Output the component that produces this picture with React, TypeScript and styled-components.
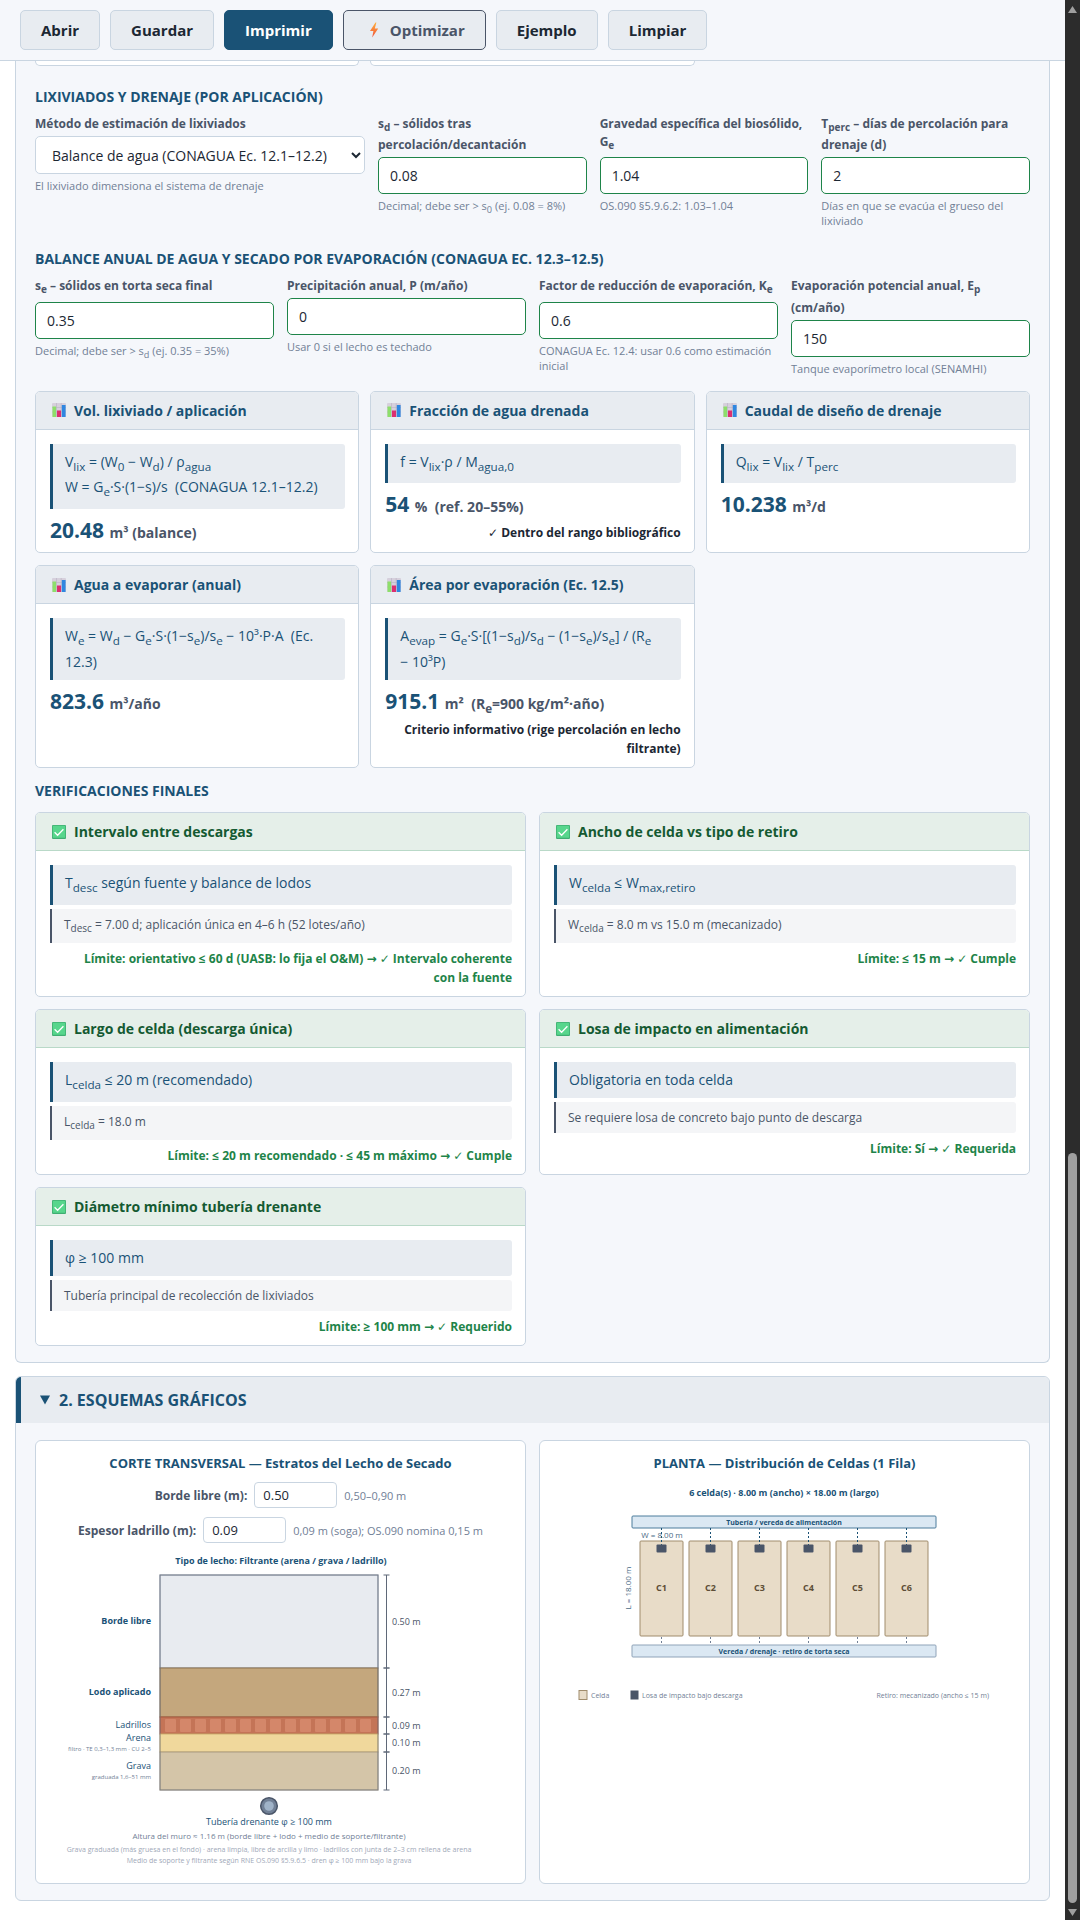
import React, { useId, useState } from "react";
import type { ReactNode } from "react";
import styled, { createGlobalStyle } from "styled-components";

const c = {
  primary: "#1a5276",
  border: "#c9d5e1",
  panel: "#f5f7fb",
  soft: "#e8ecf1",
  text: "#1c2733",
  muted: "#4a5568",
  hint: "#718096",
  ok: "#1e8449",
};

const GlobalStyle = createGlobalStyle`
  *, *::before, *::after { box-sizing: border-box; }
  body {
    margin: 0;
    background: #fff;
    color: ${c.text};
    font-family: "Open Sans", "Noto Sans", "DejaVu Sans", sans-serif;
    font-size: 14px;
  }
  button, input, select { font-family: inherit; }
  h2, h3, p { margin: 0; }
  sub { line-height: 1.7; }
`;

const Shell = styled.div`
  display: grid;
  grid-template-columns: minmax(0, 1fr) 15px;
  min-height: 100vh;
`;

const Page = styled.div`
  display: flex;
  flex-direction: column;
`;

const Toolbar = styled.header`
  display: flex;
  gap: 10px;
  padding: 10px 20px;
  background: ${c.panel};
  border-bottom: 1px solid ${c.border};
`;

const ToolButton = styled.button<{ $kind?: "primary" | "outline" }>`
  display: flex;
  align-items: center;
  gap: 10px;
  height: 40px;
  padding: 0 20px;
  border: 1px solid
    ${(p) =>
      p.$kind === "primary" ? c.primary : p.$kind === "outline" ? c.muted : c.border};
  border-radius: 5px;
  background: ${(p) => (p.$kind === "primary" ? c.primary : c.soft)};
  color: ${(p) =>
    p.$kind === "primary" ? "#fff" : p.$kind === "outline" ? c.muted : c.text};
  font-size: 15px;
  font-weight: 700;
  cursor: pointer;
`;

const Main = styled.main`
  display: flex;
  flex-direction: column;
  gap: 13px;
  padding: 0 15px 20px;
`;

const Panel = styled.section<{ $open?: boolean }>`
  background: ${c.panel};
  border: 1px solid ${c.border};
  border-top-width: ${(p) => (p.$open ? 0 : 1)}px;
  border-radius: ${(p) => (p.$open ? "0 0 6px 6px" : "6px")};
  overflow: hidden;
`;

const PanelBody = styled.div<{ $flush?: boolean }>`
  padding: ${(p) => (p.$flush ? 0 : 17)}px 19px 16px;
`;

const PanelHead = styled.button`
  display: flex;
  align-items: center;
  gap: 9px;
  width: 100%;
  height: 46px;
  padding: 0 19px;
  border: 0;
  border-left: 5px solid ${c.primary};
  background: ${c.soft};
  color: ${c.primary};
  font-size: 16px;
  font-weight: 700;
  text-align: left;
`;

const Grid = styled.div<{ $cols: string; $gap: number }>`
  display: grid;
  grid-template-columns: ${(p) => p.$cols};
  gap: 12px ${(p) => p.$gap}px;
`;

const Results = styled.div`
  display: grid;
  grid-template-columns: repeat(3, minmax(0, 1fr));
  gap: 12px 11px;
  margin-top: 15px;
`;

const CardTail = styled.div`
  height: 5px;
  background: #fff;
  border: 1px solid ${c.border};
  border-top: 0;
  border-radius: 0 0 5px 5px;
`;

const SectionTitle = styled.h3<{ $top: number; $bottom: number }>`
  margin: ${(p) => p.$top}px 0 ${(p) => p.$bottom}px;
  color: ${c.primary};
  font-size: 14px;
  line-height: 18px;
  font-weight: 700;
`;

const FieldBox = styled.div`
  min-width: 0;
`;

const FieldLabel = styled.label`
  display: block;
  margin-bottom: 3px;
  color: ${c.muted};
  font-size: 12px;
  line-height: 18px;
  font-weight: 700;
`;

const TextInput = styled.input`
  display: block;
  width: 100%;
  height: 37px;
  padding: 0 11px;
  border: 1px solid ${c.ok};
  border-radius: 5px;
  background: #fff;
  color: ${c.text};
  font-size: 14px;
`;

const Select = styled.select`
  display: block;
  width: 100%;
  height: 38px;
  padding: 0 0 0 12px;
  border: 1px solid ${c.border};
  border-radius: 5px;
  background: #fff;
  color: ${c.text};
  font-size: 14px;
`;

const Hint = styled.p`
  margin-top: 4px;
  color: ${c.hint};
  font-size: 11px;
  line-height: 15px;
`;

const CardBox = styled.article`
  background: #fff;
  border: 1px solid ${c.border};
  border-radius: 5px;
  overflow: hidden;
`;

const CardHead = styled.h3<{ $ok?: boolean }>`
  display: flex;
  align-items: center;
  gap: 8px;
  padding: 9px 16px;
  background: ${(p) => (p.$ok ? "#e5efe9" : c.soft)};
  border-bottom: 1px solid ${(p) => (p.$ok ? "#b9d9c8" : c.border)};
  color: ${(p) => (p.$ok ? "#145a32" : c.primary)};
  font-size: 14px;
  line-height: 19px;
  font-weight: 700;
`;

const CardBody = styled.div`
  padding: 14px 13px 9px 14px;
`;

const Formula = styled.div`
  padding: 7px 12px;
  border-left: 3px solid ${c.primary};
  border-radius: 0 3px 3px 0;
  background: ${c.soft};
  color: ${c.primary};
  font-size: 14px;
  line-height: 22px;
`;

const Detail = styled.div`
  margin-top: 4px;
  padding: 6px 12px;
  border-left: 2px solid ${c.muted};
  border-radius: 0 3px 3px 0;
  background: #f4f5f7;
  color: ${c.muted};
  font-size: 12px;
  line-height: 19px;
`;

const Value = styled.div`
  margin-top: 8px;
  color: ${c.primary};
  font-size: 21px;
  line-height: 26px;
  font-weight: 700;
`;

const Unit = styled.span`
  color: ${c.muted};
  font-size: 14px;
  line-height: 18px;
  white-space: pre;

  sub { line-height: 1; }
`;

const Note = styled.p<{ $ok?: boolean }>`
  margin-top: 6px;
  color: ${(p) => (p.$ok ? c.ok : c.text)};
  font-size: 12px;
  line-height: 19px;
  font-weight: 700;
  text-align: right;
`;

const DrawingCard = styled.article`
  display: flex;
  flex-direction: column;
  gap: 9px;
  padding: 12px 16px 15px;
  background: #fff;
  border: 1px solid ${c.border};
  border-radius: 6px;
`;

const DrawingTitle = styled.h3`
  color: ${c.primary};
  font-size: 13px;
  line-height: 20px;
  font-weight: 700;
  text-align: center;
`;

const InlineField = styled.div`
  display: flex;
  justify-content: center;
  align-items: center;
  gap: 7px;
`;

const InlineLabel = styled.label`
  color: ${c.muted};
  font-size: 12px;
  font-weight: 700;
`;

const InlineInput = styled.input`
  width: 83px;
  height: 26px;
  padding: 0 8px;
  border: 1px solid ${c.border};
  border-radius: 4px;
  background: #fff;
  color: ${c.text};
  font-size: 13px;
`;

const InlineHint = styled.span`
  color: ${c.hint};
  font-size: 11px;
`;

const Drawing = styled.svg`
  display: block;
  width: 100%;
  height: auto;
`;

const ScrollTrack = styled.div`
  display: flex;
  flex-direction: column;
  align-items: center;
  padding: 6px 0 5px;
  background: #2c2c2c;
`;

const ScrollSpace = styled.div`
  flex: 1140 1 0;
`;

const ScrollThumb = styled.div`
  flex: 750 1 0;
  width: 9px;
  margin-bottom: 6px;
  border-radius: 5px;
  background: #9f9f9f;
`;

function ChartIcon() {
  return (
    <svg width="14" height="14" viewBox="0 0 14 14" aria-hidden="true">
      <rect width="14" height="14" rx="1" fill="#d6d0dc" />
      <path d="M0 4.5H14M0 9H14M4.5 0V14M9.2 0V14" stroke="#b9b2c4" strokeWidth="0.6" />
      <rect x="0.5" y="3.5" width="3.6" height="10.5" fill="#8ddf6b" />
      <rect x="5" y="7.5" width="4" height="6.5" fill="#dc2f70" />
      <rect x="9.8" y="2" width="3.8" height="12" fill="#2f86e0" />
    </svg>
  );
}

function CheckIcon() {
  return (
    <svg width="14" height="14" viewBox="0 0 14 14" aria-hidden="true">
      <rect width="14" height="14" rx="1" fill="#3fae72" />
      <rect x="0.8" y="0.8" width="12.4" height="12" rx="0.6" fill="#57d68c" />
      <path d="M2.6 7.2L5.6 10.2L11.4 4.2" fill="none" stroke="#fff" strokeWidth="1.3" />
    </svg>
  );
}

function BoltIcon() {
  return (
    <svg width="16" height="16" viewBox="-4 0 16 16" aria-hidden="true">
      <defs>
        <linearGradient id="bolt" x1="0" y1="0" x2="0" y2="1">
          <stop offset="0" stopColor="#ffb03a" />
          <stop offset="1" stopColor="#f0503c" />
        </linearGradient>
      </defs>
      <path d="M7.5 0.5L2 9H5.4L4.2 15.5L10.2 6.6H6.8L8.4 0.5Z" fill="url(#bolt)" />
    </svg>
  );
}

function Field({ label, value, hint }: { label: ReactNode; value: string; hint: ReactNode }) {
  const id = useId();
  const [text, setText] = useState(value);
  return (
    <FieldBox>
      <FieldLabel htmlFor={id}>{label}</FieldLabel>
      <TextInput id={id} value={text} onChange={(e) => setText(e.target.value)} />
      <Hint>{hint}</Hint>
    </FieldBox>
  );
}

function SmallField({ label, value, hint }: { label: string; value: string; hint: string }) {
  const id = useId();
  const [text, setText] = useState(value);
  return (
    <InlineField>
      <InlineLabel htmlFor={id}>{label}</InlineLabel>
      <InlineInput id={id} value={text} onChange={(e) => setText(e.target.value)} />
      <InlineHint>{hint}</InlineHint>
    </InlineField>
  );
}

interface ResultProps {
  title: string;
  formula: ReactNode;
  value: string;
  unit: ReactNode;
  note?: string;
}

function Result({ title, formula, value, unit, note }: ResultProps) {
  return (
    <CardBox>
      <CardHead>
        <ChartIcon />
        {title}
      </CardHead>
      <CardBody>
        <Formula>{formula}</Formula>
        <Value>
          {value} <Unit>{unit}</Unit>
        </Value>
        {note && <Note>{note}</Note>}
      </CardBody>
    </CardBox>
  );
}

interface CheckProps {
  title: string;
  formula: ReactNode;
  detail: ReactNode;
  note: string;
}

function Check({ title, formula, detail, note }: CheckProps) {
  return (
    <CardBox>
      <CardHead $ok>
        <CheckIcon />
        {title}
      </CardHead>
      <CardBody>
        <Formula>{formula}</Formula>
        <Detail>{detail}</Detail>
        <Note $ok>{note}</Note>
      </CardBody>
    </CardBox>
  );
}

const layers = [
  { name: "Borde libre", size: "0.50 m", y: 23, h: 93, fill: "#e8ebf0", stroke: "#8a93a3", ly: 72, bold: true },
  { name: "Lodo aplicado", size: "0.27 m", y: 116, h: 49, fill: "#c4a77d", stroke: "#8b7350", ly: 143, bold: true },
  { name: "Ladrillos", size: "0.09 m", y: 165, h: 17, fill: "#c47457", stroke: "#a8583f", ly: 176 },
  { name: "Arena", size: "0.10 m", y: 182, h: 18, fill: "#f0d89c", stroke: "#cdb070", ly: 189, sub: "filtro · TE 0,3–1,3 mm · CU 2–5" },
  { name: "Grava", size: "0.20 m", y: 200, h: 38, fill: "#d4c5a8", stroke: "#aa9c82", ly: 217, sub: "graduada 1,6–51 mm" },
];

function SectionDrawing() {
  return (
    <Drawing viewBox="0 0 457 316" role="img" aria-label="Corte transversal">
      <text x="229" y="12" textAnchor="middle" fontSize="9" fontWeight="700" fill={c.primary}>
        Tipo de lecho: Filtrante (arena / grava / ladrillo)
      </text>
      {layers.map((l) => (
        <g key={l.name}>
          <rect x="108" y={l.y} width="218" height={l.h} fill={l.fill} stroke={l.stroke} />
          <text
            x="99"
            y={l.ly}
            textAnchor="end"
            fontSize="9"
            fontWeight={l.bold ? 700 : 400}
            fill={c.primary}
          >
            {l.name}
          </text>
          {l.sub && (
            <text x="99" y={l.ly + 10} textAnchor="end" fontSize="6" fill={c.hint}>
              {l.sub}
            </text>
          )}
          <path
            d={`M334.5 ${l.y}V${l.y + l.h}M331.5 ${l.y}H337.5M331.5 ${l.y + l.h}H337.5`}
            stroke="#5f6878"
            fill="none"
          />
          <text x="340" y={l.y + l.h / 2 + 3} fontSize="9" fill={c.muted}>
            {l.size}
          </text>
        </g>
      ))}
      {Array.from({ length: 14 }, (_, i) => (
        <rect
          key={i}
          x={113 + i * 15}
          y="167"
          width="11"
          height="13"
          rx="1"
          fill="#d4876a"
        />
      ))}
      <rect x="108" y="23" width="218" height="215" fill="none" stroke="#6b7280" strokeOpacity="0.7" />
      <circle cx="217" cy="254" r="8.3" fill="#718096" stroke="#4a5568" strokeWidth="1.5" />
      <circle cx="217" cy="254" r="4.8" fill="#a0b3c8" />
      <g textAnchor="middle">
        <text x="217" y="273" fontSize="9" fill={c.primary}>
          Tubería drenante φ ≥ 100 mm
        </text>
        <text x="217" y="287" fontSize="8" fill="#718096">
          Altura del muro ≈ 1.16 m (borde libre + lodo + medio de soporte/filtrante)
        </text>
        <text x="217" y="300" fontSize="7" fill="#a0a8b8">
          Grava graduada (más gruesa en el fondo) · arena limpia, libre de arcilla y limo · ladrillos con junta de 2–3 cm rellena de arena
        </text>
        <text x="217" y="311" fontSize="7" fill="#a0a8b8">
          Medio de soporte y filtrante según RNE OS.090 §5.9.6.5 · dren φ ≥ 100 mm bajo la grava
        </text>
      </g>
    </Drawing>
  );
}

function PlanDrawing() {
  return (
    <Drawing viewBox="0 0 457 230" role="img" aria-label="Planta de celdas">
      <text x="228" y="14" textAnchor="middle" fontSize="9" fontWeight="700" fill={c.primary}>
        6 celda(s) · 8.00 m (ancho) × 18.00 m (largo)
      </text>
      <rect x="76" y="34" width="304" height="12" rx="1" fill="#dbe8f3" stroke="#4d7c9c" />
      <text x="228" y="43" textAnchor="middle" fontSize="7" fontWeight="700" fill={c.primary}>
        Tubería / vereda de alimentación
      </text>
      <rect x="76" y="163" width="304" height="12" rx="1" fill="#dbe8f3" stroke="#8fa3b8" />
      <text x="228" y="172" textAnchor="middle" fontSize="7" fontWeight="700" fill={c.primary}>
        Vereda / drenaje · retiro de torta seca
      </text>
      <text x="106" y="56" textAnchor="middle" fontSize="8" fill="#4a6a85">
        W = 8.00 m
      </text>
      <text
        x="75"
        y="106"
        textAnchor="middle"
        fontSize="8"
        fill="#4a6a85"
        transform="rotate(-90 75 106)"
      >
        L = 18.00 m
      </text>
      {Array.from({ length: 6 }, (_, i) => {
        const x = 84 + i * 49;
        return (
          <g key={i}>
            <rect x={x} y="59" width="43" height="95" rx="1" fill="#e8dcc8" stroke="#a08c6c" />
            <path d={`M${x + 21.5} 46V63`} stroke={c.primary} strokeDasharray="2 2" />
            <path d={`M${x + 21.5} 155V163`} stroke={c.hint} strokeDasharray="2 2" />
            <rect x={x + 16.5} y="62.5" width="10" height="8" rx="1" fill="#4a5568" />
            <text x={x + 21.5} y="109" textAnchor="middle" fontSize="9" fontWeight="700" fill="#5d4e37">
              C{i + 1}
            </text>
          </g>
        );
      })}
      <rect x="23" y="208.5" width="8" height="9" fill="#e8dcc8" stroke="#a08c6c" />
      <text x="35" y="216" fontSize="7" fill={c.hint}>
        Celda
      </text>
      <rect x="74.5" y="208.5" width="8" height="9" fill="#4a5568" />
      <text x="86" y="216" fontSize="7" fill={c.hint}>
        Losa de impacto bajo descarga
      </text>
      <text x="433" y="216" textAnchor="end" fontSize="7" fill={c.hint}>
        Retiro: mecanizado (ancho ≤ 15 m)
      </text>
    </Drawing>
  );
}

const nb = "\u00a0";

export default function App() {
  const [open, setOpen] = useState(true);
  return (
    <>
      <GlobalStyle />
      <Shell>
        <Page>
          <Toolbar>
            <ToolButton>Abrir</ToolButton>
            <ToolButton>Guardar</ToolButton>
            <ToolButton $kind="primary">Imprimir</ToolButton>
            <ToolButton $kind="outline">
              <BoltIcon />
              Optimizar
            </ToolButton>
            <ToolButton>Ejemplo</ToolButton>
            <ToolButton>Limpiar</ToolButton>
          </Toolbar>
          <Main>
            <Panel $open>
              <PanelBody $flush>
                <Grid $cols="repeat(3, minmax(0, 1fr))" $gap={11}>
                  <CardTail />
                  <CardTail />
                </Grid>
                <SectionTitle $top={22} $bottom={9}>
                  LIXIVIADOS Y DRENAJE (POR APLICACIÓN)
                </SectionTitle>
                <Grid $cols="330px repeat(3, minmax(0, 1fr))" $gap={13}>
                  <FieldBox>
                    <FieldLabel htmlFor="metodo">Método de estimación de lixiviados</FieldLabel>
                    <Select id="metodo">
                      <option>Balance de agua (CONAGUA Ec. 12.1–12.2)</option>
                    </Select>
                    <Hint>El lixiviado dimensiona el sistema de drenaje</Hint>
                  </FieldBox>
                  <Field
                    label={<>s<sub>d</sub> – sólidos tras percolación/decantación</>}
                    value="0.08"
                    hint={<>Decimal; debe ser &gt; s<sub>0</sub> (ej. 0.08 = 8%)</>}
                  />
                  <Field
                    label={<>Gravedad específica del biosólido, G<sub>e</sub></>}
                    value="1.04"
                    hint="OS.090 §5.9.6.2: 1.03–1.04"
                  />
                  <Field
                    label={<>T<sub>perc</sub> – días de percolación para drenaje (d)</>}
                    value="2"
                    hint="Días en que se evacúa el grueso del lixiviado"
                  />
                </Grid>
                <SectionTitle $top={22} $bottom={9}>
                  BALANCE ANUAL DE AGUA Y SECADO POR EVAPORACIÓN (CONAGUA EC. 12.3–12.5)
                </SectionTitle>
                <Grid $cols="repeat(4, minmax(0, 1fr))" $gap={13}>
                  <Field
                    label={<>s<sub>e</sub> – sólidos en torta seca final</>}
                    value="0.35"
                    hint={<>Decimal; debe ser &gt; s<sub>d</sub> (ej. 0.35 = 35%)</>}
                  />
                  <Field
                    label="Precipitación anual, P (m/año)"
                    value="0"
                    hint="Usar 0 si el lecho es techado"
                  />
                  <Field
                    label={<>Factor de reducción de evaporación, K<sub>e</sub></>}
                    value="0.6"
                    hint="CONAGUA Ec. 12.4: usar 0.6 como estimación inicial"
                  />
                  <Field
                    label={<>Evaporación potencial anual, E<sub>p</sub> (cm/año)</>}
                    value="150"
                    hint="Tanque evaporímetro local (SENAMHI)"
                  />
                </Grid>
                <Results>
                  <Result
                    title="Vol. lixiviado / aplicación"
                    formula={
                      <>
                        V<sub>lix</sub> = (W<sub>0</sub> − W<sub>d</sub>) / ρ<sub>agua</sub>
                        <br />
                        W = G<sub>e</sub>·S·(1−s)/s{nb} (CONAGUA 12.1–12.2)
                      </>
                    }
                    value="20.48"
                    unit="m³ (balance)"
                  />
                  <Result
                    title="Fracción de agua drenada"
                    formula={<>f = V<sub>lix</sub>·ρ / M<sub>agua,0</sub></>}
                    value="54"
                    unit="%  (ref. 20–55%)"
                    note="✓ Dentro del rango bibliográfico"
                  />
                  <Result
                    title="Caudal de diseño de drenaje"
                    formula={<>Q<sub>lix</sub> = V<sub>lix</sub> / T<sub>perc</sub></>}
                    value="10.238"
                    unit="m³/d"
                  />
                  <Result
                    title="Agua a evaporar (anual)"
                    formula={
                      <>
                        W<sub>e</sub> = W<sub>d</sub> − G<sub>e</sub>·S·(1−s<sub>e</sub>)/s<sub>e</sub> − 10³·P·A
                        {nb} (Ec. 12.3)
                      </>
                    }
                    value="823.6"
                    unit="m³/año"
                  />
                  <Result
                    title="Área por evaporación (Ec. 12.5)"
                    formula={
                      <>
                        A<sub>evap</sub> = G<sub>e</sub>·S·[(1−s<sub>d</sub>)/s<sub>d</sub> − (1−s<sub>e</sub>)/s
                        <sub>e</sub>] / (R<sub>e</sub> −{nb}10³P)
                      </>
                    }
                    value="915.1"
                    unit={<>m²  (R<sub>e</sub>=900 kg/m²·año)</>}
                    note="Criterio informativo (rige percolación en lecho filtrante)"
                  />
                </Results>
                <SectionTitle $top={14} $bottom={12}>
                  VERIFICACIONES FINALES
                </SectionTitle>
                <Grid $cols="repeat(2, minmax(0, 1fr))" $gap={13}>
                  <Check
                    title="Intervalo entre descargas"
                    formula={<>T<sub>desc</sub> según fuente y balance de lodos</>}
                    detail={<>T<sub>desc</sub> = 7.00 d; aplicación única en 4–6 h (52 lotes/año)</>}
                    note={`Límite: orientativo ≤ 60 d (UASB: lo fija el O&M) → ✓ Intervalo coherente con${nb}la${nb}fuente`}
                  />
                  <Check
                    title="Ancho de celda vs tipo de retiro"
                    formula={<>W<sub>celda</sub> ≤ W<sub>max,retiro</sub></>}
                    detail={<>W<sub>celda</sub> = 8.0 m vs 15.0 m (mecanizado)</>}
                    note="Límite: ≤ 15 m → ✓ Cumple"
                  />
                  <Check
                    title="Largo de celda (descarga única)"
                    formula={<>L<sub>celda</sub> ≤ 20 m (recomendado)</>}
                    detail={<>L<sub>celda</sub> = 18.0 m</>}
                    note="Límite: ≤ 20 m recomendado · ≤ 45 m máximo → ✓ Cumple"
                  />
                  <Check
                    title="Losa de impacto en alimentación"
                    formula="Obligatoria en toda celda"
                    detail="Se requiere losa de concreto bajo punto de descarga"
                    note="Límite: Sí → ✓ Requerida"
                  />
                  <Check
                    title="Diámetro mínimo tubería drenante"
                    formula="φ ≥ 100 mm"
                    detail="Tubería principal de recolección de lixiviados"
                    note="Límite: ≥ 100 mm → ✓ Requerido"
                  />
                </Grid>
              </PanelBody>
            </Panel>
            <Panel>
              <PanelHead aria-expanded={open} onClick={() => setOpen(!open)}>
                <svg width="10" height="10" viewBox="0 0 10 10" aria-hidden="true">
                  <path d="M0 0.5H10L5 9.5Z" fill={c.primary} />
                </svg>
                2. ESQUEMAS GRÁFICOS
              </PanelHead>
              {open && (
                <PanelBody>
                  <Grid $cols="repeat(2, minmax(0, 1fr))" $gap={13}>
                    <DrawingCard>
                      <DrawingTitle>CORTE TRANSVERSAL — Estratos del Lecho de Secado</DrawingTitle>
                      <SmallField label="Borde libre (m):" value="0.50" hint="0,50–0,90 m" />
                      <SmallField
                        label="Espesor ladrillo (m):"
                        value="0.09"
                        hint="0,09 m (soga); OS.090 nomina 0,15 m"
                      />
                      <SectionDrawing />
                    </DrawingCard>
                    <DrawingCard>
                      <DrawingTitle>PLANTA — Distribución de Celdas (1 Fila)</DrawingTitle>
                      <PlanDrawing />
                    </DrawingCard>
                  </Grid>
                </PanelBody>
              )}
            </Panel>
          </Main>
        </Page>
        <ScrollTrack aria-hidden="true">
          <svg width="9" height="7" viewBox="0 0 9 7">
            <path d="M4.5 0L9 7H0Z" fill="#9f9f9f" />
          </svg>
          <ScrollSpace />
          <ScrollThumb />
          <svg width="9" height="7" viewBox="0 0 9 7">
            <path d="M4.5 7L9 0H0Z" fill="#9f9f9f" />
          </svg>
        </ScrollTrack>
      </Shell>
    </>
  );
}
